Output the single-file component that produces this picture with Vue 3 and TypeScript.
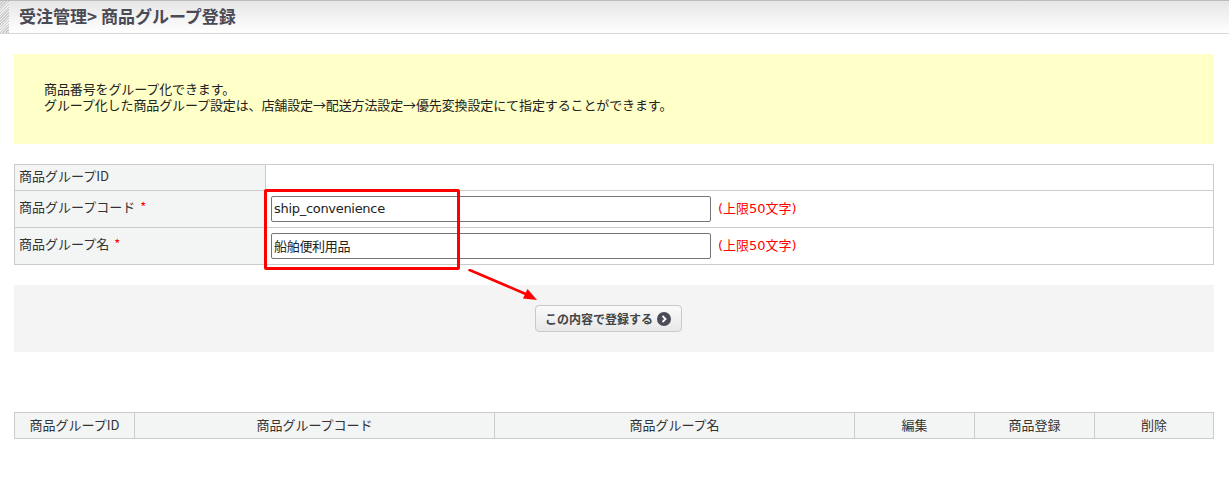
<script setup lang="ts">
const columns: { label: string; width: number }[] = [
  { label: '商品グループID', width: 119 },
  { label: '商品グループコード', width: 360 },
  { label: '商品グループ名', width: 360 },
  { label: '編集', width: 120 },
  { label: '商品登録', width: 120 },
  { label: '削除', width: 119 },
]
</script>

<template>
  <div class="page">
    <header class="head">
      <div class="hatch"></div>
      <h1>受注管理&gt; 商品グループ登録</h1>
    </header>

    <main class="content">
      <section class="notice">
        <p>商品番号をグループ化できます。</p>
        <p>グループ化した商品グループ設定は、店舗設定→配送方法設定→優先変換設定にて指定することができます。</p>
      </section>

      <div class="form">
        <div class="row row-id">
          <div class="label">商品グループID</div>
          <div class="value"></div>
        </div>
        <div class="row">
          <div class="label">商品グループコード <span class="req">*</span></div>
          <div class="value">
            <input class="field" type="text" value="ship_convenience" />
            <span class="limit">(上限50文字)</span>
          </div>
        </div>
        <div class="row">
          <div class="label">商品グループ名 <span class="req">*</span></div>
          <div class="value">
            <input class="field" type="text" value="船舶便利用品" />
            <span class="limit">(上限50文字)</span>
          </div>
        </div>
      </div>

      <div class="actions">
        <button class="submit" type="button">
          この内容で登録する
          <svg width="14" height="14" viewBox="0 0 14 14">
            <circle cx="7" cy="7" r="7" fill="#4a4a58" />
            <path d="M5.5 4 L8.5 7 L5.5 10" fill="none" stroke="#fff" stroke-width="1.8" />
          </svg>
        </button>
      </div>

      <div class="list">
        <div v-for="c in columns" :key="c.label" class="cell" :style="{ width: c.width + 'px' }">{{ c.label }}</div>
      </div>
    </main>

    <div class="mark"></div>
    <svg class="arrow" width="80" height="40" viewBox="0 0 80 40">
      <line x1="0.5" y1="0.5" x2="60" y2="26" stroke="#f00" stroke-width="2.6" />
      <polygon points="69,31 55,29.5 59.5,20" fill="#f00" />
    </svg>
  </div>
</template>

<style>
html, body { margin: 0; background: #fff; }
</style>

<style scoped>
.page {
  position: relative;
  width: 1229px;
  height: 483px;
  overflow: hidden;
  font-family: "Noto Sans CJK JP", "Liberation Sans", sans-serif;
  font-size: 13px;
  color: #333;
}
.head {
  display: flex;
  box-sizing: border-box;
  height: 34px;
  border-top: 1px solid #bbb;
  border-bottom: 1px solid #d8d8d8;
  background: linear-gradient(#e6e6e6, #fff);
}
.hatch {
  width: 9px;
  background: repeating-linear-gradient(135deg, #ccc 0 1px, #eee 1px 2px);
}
.head h1 {
  margin: 0;
  padding-left: 10px;
  font-size: 17px;
  line-height: 30px;
  font-weight: 700;
  color: #4a4a55;
}
.content {
  padding: 20px 15px 0 14px;
}
.notice {
  box-sizing: border-box;
  height: 90px;
  padding: 27px 30px 0;
  background: #ffffc8;
  color: #222;
  line-height: 16px;
  letter-spacing: -0.12px;
}
.notice p { margin: 0; }
.form {
  margin-top: 20px;
  border: 1px solid #ccc;
  border-bottom: 0;
}
.row {
  display: flex;
  height: 36px;
  border-bottom: 1px solid #ccc;
}
.row-id { height: 25px; }
.row-id .label { padding-top: 1px; }
.label {
  box-sizing: border-box;
  width: 251px;
  padding: 6px 4px 0;
  border-right: 1px solid #ccc;
  background: #f3f5f4;
  line-height: 20px;
}
.req { color: #f00; margin-left: 2px; }
.value {
  flex: 1;
  display: flex;
  align-items: center;
  padding-left: 5px;
}
.field {
  box-sizing: border-box;
  width: 440px;
  height: 26px;
  padding: 0 2px 2px;
  border: 1px solid #767676;
  border-radius: 2px;
  font: inherit;
  font-family: "DejaVu Sans", "Noto Sans CJK JP", sans-serif;
  letter-spacing: -0.3px;
  color: #222;
  background: #fff;
}
.limit {
  margin-left: 7px;
  padding-bottom: 3px;
  font-family: "DejaVu Sans", "Noto Sans CJK JP", sans-serif;
  color: #f00;
}
.actions {
  display: flex;
  justify-content: center;
  align-items: center;
  box-sizing: border-box;
  height: 67px;
  margin-top: 20px;
  padding-right: 11px;
  background: #f4f4f4;
}
.submit {
  display: flex;
  align-items: center;
  justify-content: center;
  gap: 4px;
  box-sizing: border-box;
  width: 147px;
  height: 27px;
  padding: 0 1px 0 0;
  border: 1px solid #c8c8d0;
  border-radius: 4px;
  background: linear-gradient(#fafafa, #e8e8e8);
  font: inherit;
  font-size: 12px;
  font-weight: 700;
  color: #444;
}
.list {
  display: flex;
  margin-top: 60px;
  border: 1px solid #ccc;
  width: 1200px;
  box-sizing: border-box;
  background: #f3f5f4;
}
.cell {
  box-sizing: border-box;
  height: 25px;
  line-height: 23px;
  text-align: center;
  border-left: 1px solid #ccc;
}
.cell:first-child { border-left: 0; }
.mark {
  position: absolute;
  left: 264px;
  top: 189px;
  width: 196px;
  height: 81px;
  box-sizing: border-box;
  border: 3px solid #f00;
  border-radius: 2px;
}
.arrow {
  position: absolute;
  left: 468px;
  top: 269px;
}
</style>
